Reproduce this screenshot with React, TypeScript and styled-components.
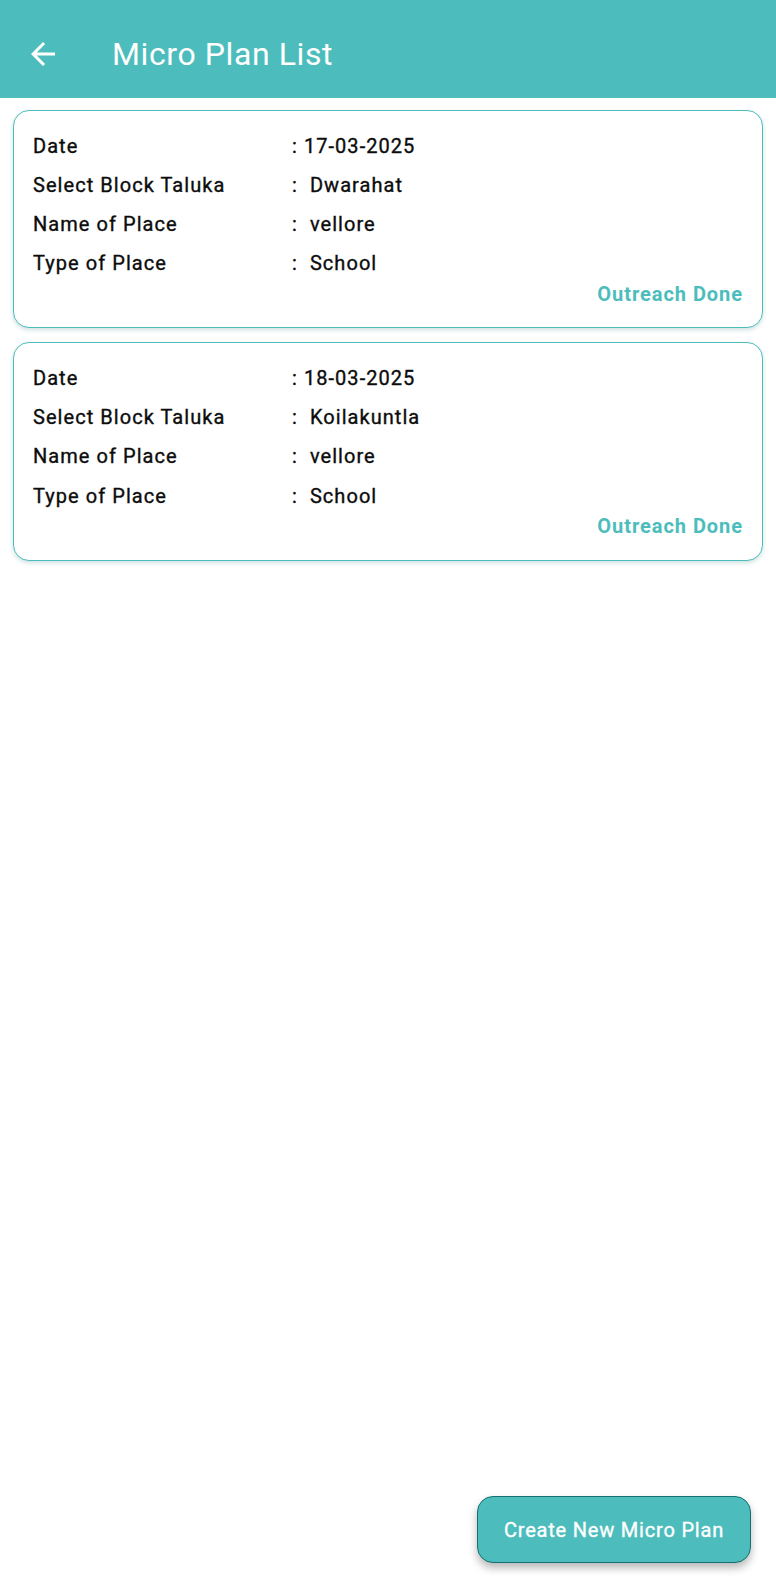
import styled, { createGlobalStyle } from "styled-components";

const GlobalStyle = createGlobalStyle`
	html, body {
		margin: 0;
		padding: 0;
		background: #ffffff;
	}
	* {
		box-sizing: border-box;
	}
	#root {
		font-family: Roboto, "Noto Sans", "Liberation Sans", sans-serif;
	}
`;

const Page = styled.div`
	min-height: 100vh;
	display: flex;
	flex-direction: column;
`;

const Header = styled.header`
	height: 98px;
	background-color: #4cbdbc;
	display: flex;
	align-items: center;
	padding: 10px 0 0 25px;
	gap: 51px;
	color: white;
`;

const BackButton = styled.button`
	width: 36px;
	height: 36px;
	padding: 0;
	border: none;
	background: none;
	display: flex;
	align-items: center;
	justify-content: center;
	cursor: pointer;
`;

const Title = styled.h1`
	margin: 0;
	font-size: 32px;
	font-weight: 400;
	letter-spacing: 0.6px;
`;

const List = styled.main`
	flex: 1;
	display: flex;
	flex-direction: column;
	gap: 14px;
	padding: 12px 13px;
`;

const Card = styled.div`
	border: 1.5px solid #4cbdbc;
	border-radius: 16px;
	background: white;
	padding: 24px 19px 21px 19px;
	box-shadow: 0 2px 4px rgba(40, 120, 120, 0.22);
	display: flex;
	flex-direction: column;
`;

const Rows = styled.div`
	display: flex;
	flex-direction: column;
	gap: 15.6px;
`;

/* medium weight is not installed: regular plus a thin stroke */
const Row = styled.div`
	display: grid;
	grid-template-columns: 259px 1fr;
	font-size: 20px;
	line-height: 23.5px;
	font-weight: 400;
	letter-spacing: 1.05px;
	-webkit-text-stroke: 0.35px #0c0c0c;
	color: #0c0c0c;
`;

const Value = styled.span`
	white-space: pre;
`;

const Status = styled.div`
	margin-top: 7px;
	align-self: flex-end;
	font-size: 20px;
	line-height: 23.5px;
	font-weight: 700;
	letter-spacing: 0.95px;
	color: #4cbdbc;
`;

const Footer = styled.div`
	display: flex;
	justify-content: flex-end;
	padding: 0 25px 22px 0;
`;

const CreateButton = styled.button`
	width: 274px;
	height: 67px;
	border-radius: 16px;
	border: 1.5px solid #16706f;
	background-color: #4cbdbc;
	color: white;
	font-family: inherit;
	font-size: 20px;
	font-weight: 400;
	letter-spacing: 0.8px;
	-webkit-text-stroke: 0.35px white;
	box-shadow: 0 5px 8px rgba(0, 0, 0, 0.28);
	cursor: pointer;
`;

type Plan = {
	date: string;
	block: string;
	place: string;
	type: string;
	status: string;
};

const plans: Plan[] = [
	{ date: "17-03-2025", block: "Dwarahat", place: "vellore", type: "School", status: "Outreach Done" },
	{ date: "18-03-2025", block: "Koilakuntla", place: "vellore", type: "School", status: "Outreach Done" },
];

const PlanCard = ({ plan }: { plan: Plan }) => (
	<Card>
		<Rows>
			<Row>
				<span>Date</span>
				<Value>: {plan.date}</Value>
			</Row>
			<Row>
				<span>Select Block Taluka</span>
				<Value>:  {plan.block}</Value>
			</Row>
			<Row>
				<span>Name of Place</span>
				<Value>:  {plan.place}</Value>
			</Row>
			<Row>
				<span>Type of Place</span>
				<Value>:  {plan.type}</Value>
			</Row>
		</Rows>
		<Status>{plan.status}</Status>
	</Card>
);

const App = () => {
	return (
		<>
			<GlobalStyle />
			<Page>
				<Header>
					<BackButton aria-label="Back">
						<svg width="36" height="36" viewBox="0 0 24 24" fill="white">
							<path d="M20 11H7.83l5.59-5.59L12 4l-8 8 8 8 1.41-1.41L7.83 13H20v-2z" />
						</svg>
					</BackButton>
					<Title>Micro Plan List</Title>
				</Header>
				<List>
					{plans.map((p, i) => (
						<PlanCard key={i} plan={p} />
					))}
				</List>
				<Footer>
					<CreateButton type="button">Create New Micro Plan</CreateButton>
				</Footer>
			</Page>
		</>
	);
};

export default App;
